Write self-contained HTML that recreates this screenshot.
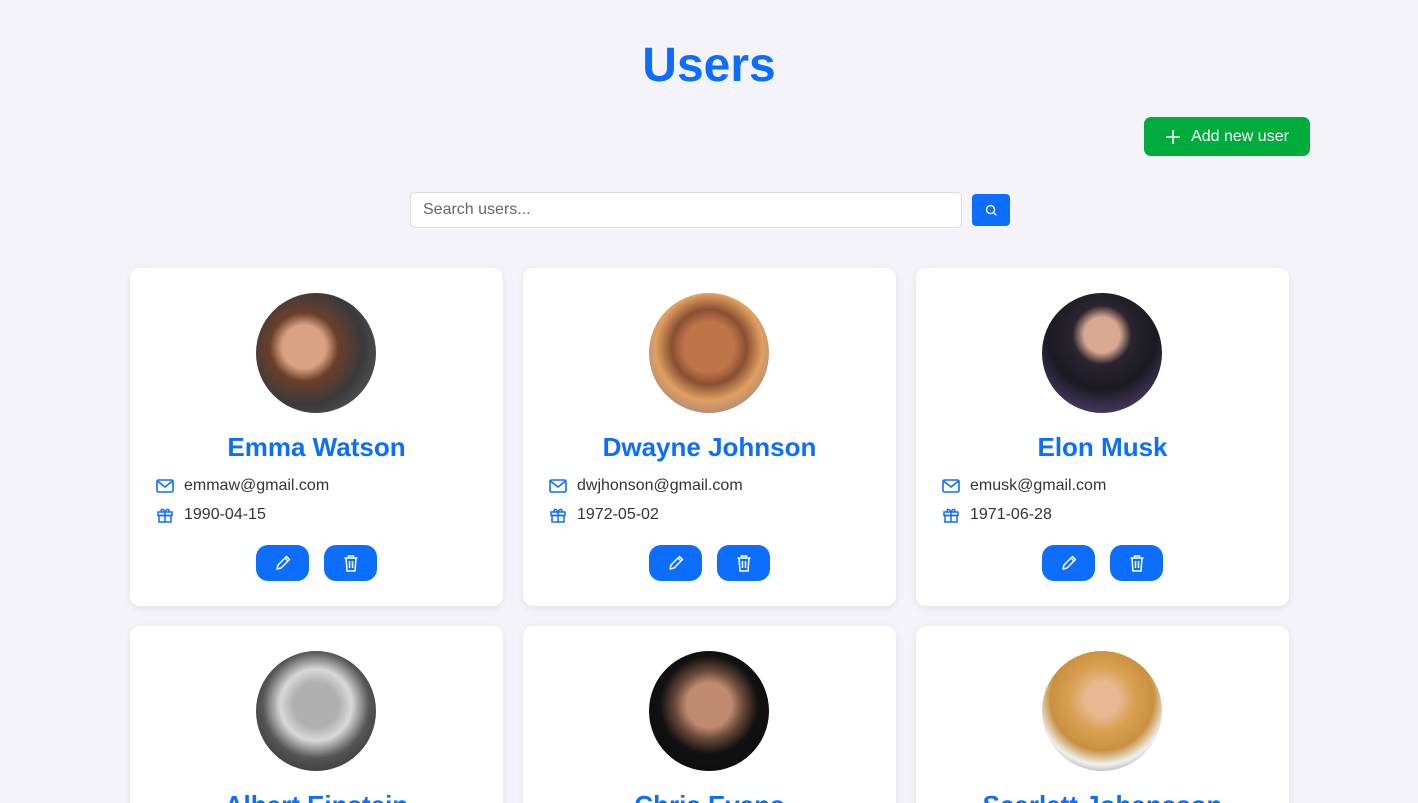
<!DOCTYPE html>
<html style="width:1418px;height:803px;overflow:hidden"><head><meta charset="utf-8"><style>
*{box-sizing:border-box;margin:0;padding:0}
html,body{width:1418px;height:803px;overflow:hidden}
body{background:#f3f3f9;font-family:"Liberation Sans",Arial,sans-serif;position:relative}
h1{position:absolute;top:38px;left:0;width:1418px;text-align:center;color:#0d6efd;font-size:48px;font-weight:bold}
.add{position:absolute;left:1144px;top:117px;width:166px;height:39px;background:#00ad3c;border-radius:7px;color:#fff;font-size:16px;display:flex;align-items:center;justify-content:center;gap:10px}
.search{position:absolute;left:410px;top:192px;width:552px;height:36px;background:#fff;border:1px solid #dcdce0;border-radius:5px;padding-left:12px;line-height:34px;color:#666;font-size:16px}
.sbtn{position:absolute;left:972px;top:194px;width:38px;height:32px;background:#0d6efd;border-radius:4px;display:flex;align-items:center;justify-content:center}
.card{position:absolute;width:373px;height:338px;background:#fff;border-radius:10px;box-shadow:0 2px 8px rgba(0,0,0,.08)}
.av{position:absolute;left:126px;top:25px;width:120px;height:120px;border-radius:50%}
.name{position:absolute;top:164px;left:0;width:100%;text-align:center;color:#0d6efd;font-size:26px;font-weight:bold}
.row{position:absolute;left:26px;display:flex;align-items:center;gap:10px;font-size:16px;color:#333}
.btns{position:absolute;top:277px;left:126px;display:flex;gap:15px}
.b{width:53px;height:36px;background:#0d6efd;border-radius:12px;display:flex;align-items:center;justify-content:center}
</style></head><body>
<h1>Users</h1>
<div class="add"><svg width="16" height="16" viewBox="0 0 16 16"><path d="M8 1v14M1 8h14" stroke="#fff" stroke-width="1.6"/></svg>Add new user</div>
<div class="search">Search users...</div>
<div class="sbtn"><svg width="13" height="13" viewBox="0 0 14 14"><circle cx="6" cy="6" r="4.3" fill="none" stroke="#fff" stroke-width="1.4"/><path d="M9.2 9.2l3 3" stroke="#fff" stroke-width="1.4"/></svg></div>

<div class="card" style="left:130px;top:268px">
<div class="av" style="background:radial-gradient(circle at 40% 45%,#d9a282 0 22%,#6b3f2a 35%,#3a3a3c 60%,#6a6a6d)"></div>
<div class="name">Emma Watson</div>
<div class="row" style="top:209px"><svg width="18" height="14" viewBox="0 0 18 14"><rect x="1" y="1" width="16" height="12" rx="1.5" fill="none" stroke="#0d6efd" stroke-width="1.6"/><path d="M1.5 2l7.5 6 7.5-6" fill="none" stroke="#0d6efd" stroke-width="1.6"/></svg>emmaw@gmail.com</div>
<div class="row" style="top:238px"><svg width="18" height="16" viewBox="0 0 18 16"><rect x="2" y="5" width="14" height="3.5" fill="none" stroke="#0d6efd" stroke-width="1.5"/><rect x="3" y="8.5" width="12" height="6.5" fill="none" stroke="#0d6efd" stroke-width="1.5"/><path d="M9 5v10M9 5C7 1 4 2 5.5 5M9 5c2-4 5-3 3.5 0" fill="none" stroke="#0d6efd" stroke-width="1.5"/></svg>1990-04-15</div>
<div class="btns"><div class="b"><svg width="18" height="18" viewBox="0 0 18 18"><path d="M3 15l1-4L12.5 2.5l3 3L7 14z M11 4l3 3" fill="none" stroke="#fff" stroke-width="1.5" stroke-linejoin="round"/></svg></div><div class="b"><svg width="16" height="18" viewBox="0 0 16 18"><path d="M1.5 4h13M5.5 4V2h5v2M3 4l1 13h8l1-13M6.5 7v7M9.5 7v7" fill="none" stroke="#fff" stroke-width="1.5"/></svg></div></div>
</div>

<div class="card" style="left:523px;top:268px">
<div class="av" style="background:radial-gradient(circle at 50% 45%,#c0744a 0 28%,#8a4f33 42%,#e0a060 60%,#6a6a9a)"></div>
<div class="name">Dwayne Johnson</div>
<div class="row" style="top:209px"><svg width="18" height="14" viewBox="0 0 18 14"><rect x="1" y="1" width="16" height="12" rx="1.5" fill="none" stroke="#0d6efd" stroke-width="1.6"/><path d="M1.5 2l7.5 6 7.5-6" fill="none" stroke="#0d6efd" stroke-width="1.6"/></svg>dwjhonson@gmail.com</div>
<div class="row" style="top:238px"><svg width="18" height="16" viewBox="0 0 18 16"><rect x="2" y="5" width="14" height="3.5" fill="none" stroke="#0d6efd" stroke-width="1.5"/><rect x="3" y="8.5" width="12" height="6.5" fill="none" stroke="#0d6efd" stroke-width="1.5"/><path d="M9 5v10M9 5C7 1 4 2 5.5 5M9 5c2-4 5-3 3.5 0" fill="none" stroke="#0d6efd" stroke-width="1.5"/></svg>1972-05-02</div>
<div class="btns"><div class="b"><svg width="18" height="18" viewBox="0 0 18 18"><path d="M3 15l1-4L12.5 2.5l3 3L7 14z M11 4l3 3" fill="none" stroke="#fff" stroke-width="1.5" stroke-linejoin="round"/></svg></div><div class="b"><svg width="16" height="18" viewBox="0 0 16 18"><path d="M1.5 4h13M5.5 4V2h5v2M3 4l1 13h8l1-13M6.5 7v7M9.5 7v7" fill="none" stroke="#fff" stroke-width="1.5"/></svg></div></div>
</div>

<div class="card" style="left:916px;top:268px">
<div class="av" style="background:radial-gradient(circle at 50% 35%,#d8a890 0 18%,#2a2430 30%,#1a1a22 55%,#6a5090)"></div>
<div class="name">Elon Musk</div>
<div class="row" style="top:209px"><svg width="18" height="14" viewBox="0 0 18 14"><rect x="1" y="1" width="16" height="12" rx="1.5" fill="none" stroke="#0d6efd" stroke-width="1.6"/><path d="M1.5 2l7.5 6 7.5-6" fill="none" stroke="#0d6efd" stroke-width="1.6"/></svg>emusk@gmail.com</div>
<div class="row" style="top:238px"><svg width="18" height="16" viewBox="0 0 18 16"><rect x="2" y="5" width="14" height="3.5" fill="none" stroke="#0d6efd" stroke-width="1.5"/><rect x="3" y="8.5" width="12" height="6.5" fill="none" stroke="#0d6efd" stroke-width="1.5"/><path d="M9 5v10M9 5C7 1 4 2 5.5 5M9 5c2-4 5-3 3.5 0" fill="none" stroke="#0d6efd" stroke-width="1.5"/></svg>1971-06-28</div>
<div class="btns"><div class="b"><svg width="18" height="18" viewBox="0 0 18 18"><path d="M3 15l1-4L12.5 2.5l3 3L7 14z M11 4l3 3" fill="none" stroke="#fff" stroke-width="1.5" stroke-linejoin="round"/></svg></div><div class="b"><svg width="16" height="18" viewBox="0 0 16 18"><path d="M1.5 4h13M5.5 4V2h5v2M3 4l1 13h8l1-13M6.5 7v7M9.5 7v7" fill="none" stroke="#fff" stroke-width="1.5"/></svg></div></div>
</div>

<div class="card" style="left:130px;top:626px">
<div class="av" style="background:radial-gradient(circle at 50% 45%,#b0b0b0 0 25%,#d8d8d8 40%,#555 60%,#222)"></div>
<div class="name">Albert Einstein</div>
</div>
<div class="card" style="left:523px;top:626px">
<div class="av" style="background:radial-gradient(circle at 50% 45%,#c08a70 0 25%,#6a4a3a 38%,#111 55%,#0a0a0a)"></div>
<div class="name">Chris Evans</div>
</div>
<div class="card" style="left:916px;top:626px">
<div class="av" style="background:radial-gradient(circle at 50% 40%,#e8b890 0 18%,#d8a050 35%,#c89040 55%,#f0f0f0 70%,#333)"></div>
<div class="name">Scarlett Johansson</div>
</div>
</body></html>
